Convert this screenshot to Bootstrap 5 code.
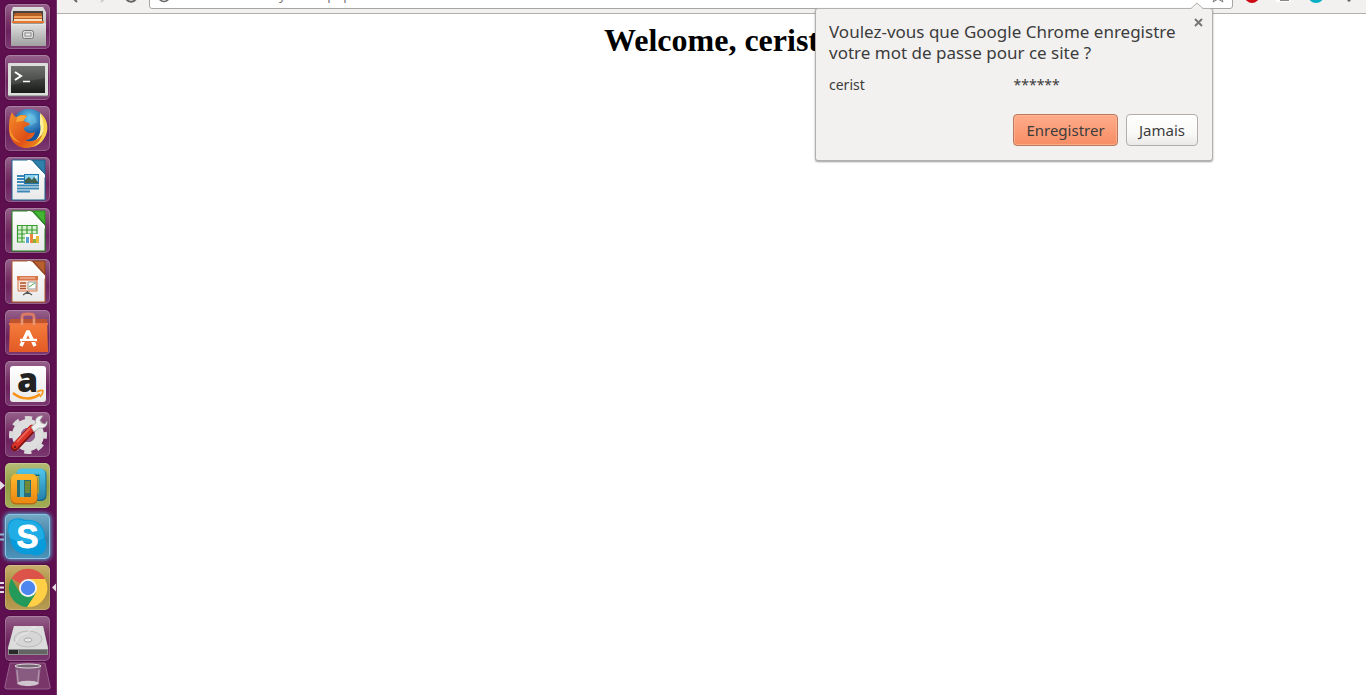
<!DOCTYPE html>
<html lang="fr">
<head>
<meta charset="utf-8">
<meta name="viewport" content="width=device-width, initial-scale=1">
<title>Welcome</title>
<link href="https://cdn.jsdelivr.net/npm/bootstrap@5.3.0/dist/css/bootstrap.min.css" rel="stylesheet">
<style>
  body { background: #fff; font-family: "Noto Sans", "Open Sans", sans-serif; color: #3c3c3c; }
  .launcher { width: 57px; padding: 4px 5px 0; gap: 6px; background: #5e0f4f; border-right: 1px solid #763a6b; }
  .tile { width: 45px; height: 45px; border: 0; padding: 0; border-radius: 5px; flex: none;
    background: linear-gradient(#96628c, #793568 38%, #6c2260 60%, #7c3970);
    box-shadow: inset 0 0 0 1px rgba(255,255,255,.2), 0 0 2px rgba(40,0,35,.6); }
  .tile svg { display: block; width: 45px; height: 45px; overflow: visible; }
  .tile-vm { background: linear-gradient(#b5bd76, #929e42 50%, #a3ad57); }
  .tile-skype { background: linear-gradient(#74aac5, #3e7da2 55%, #4d94bb); box-shadow: inset 0 0 0 1px #8cc4e0, 0 0 4px 1px #58a9d3; }
  .tile-chrome { background: linear-gradient(#c8b06c, #a8893c 50%, #b79c52); }
  .tile-bin { height: 28px; margin-top: -5px; background: none; box-shadow: none; }
  .tile-bin svg { height: 28px; }
  .browser { min-width: 0; }
  .toolbar { height: 14px; padding-bottom: 4px; background: #f2f1f0; border-bottom: 1px solid #b3b1af; overflow: hidden; }
  .tool { border: 0; background: none; padding: 0; flex: none; }
  .tool svg, .omnibox svg { display: block; }
  .nav-tools { width: 92px; padding-left: 10px; gap: 14px; }
  .ext-tools { width: 133px; padding-left: 10px; gap: 16px; }
  .omnibox { height: 28px; background: #fff; border: 1px solid #a6a6a6; border-radius: 3px; padding: 0 7px; }
  .omnibox input { border: 0; outline: 0; padding: 0; margin-left: 7px; font-size: 13px; line-height: 20px; color: #777; background: none; min-width: 0; }
  .page-title { font: bold 32px/36px "Liberation Serif", serif; color: #000; margin: 8px 0 0; }
  .bubble { top: 8px; right: 153px; width: 398px; padding: 12px 14px 14px 13px; background: #f2f1f0; border: 1px solid #b3b1af; border-radius: 3px; box-shadow: 0 1px 2px rgba(0,0,0,.4); }
  .bubble-tip { top: -7px; right: 8px; }
  .bubble-close { top: 8px; right: 9px; border: 0; padding: 0; background: none; }
  .bubble-close svg { display: block; }
  .bubble h2 { font-size: 17px; line-height: 21px; margin: 0 0 12px; white-space: nowrap; font-weight: 400; }
  .cred { font-size: 14px; line-height: 20px; margin-bottom: 19px; }
  .act { height: 32px; font-size: 15px; line-height: 20px; padding: 0 8px; border-radius: 4px; color: #3c3c3c; border: 1px solid #b1aeab; background: linear-gradient(#fff, #f9f9f8 60%, #ebe9e7); }
  .act-save { width: 105px; border-color: #b9795f; background: linear-gradient(#ffac8b, #f68d65); box-shadow: inset 0 0 0 1px rgba(255,190,160,.6); }
  .act-never { width: 72px; }
</style>
</head>
<body>
<div class="d-flex min-vh-100">
  <nav class="launcher d-flex flex-column flex-shrink-0 position-relative" aria-label="Lanceur">
    <svg width="0" height="0" class="position-absolute" aria-hidden="true">
      <defs>
        <linearGradient id="gGrey" x2="0" y2="1"><stop stop-color="#dedede"/><stop offset="1" stop-color="#a0a0a0"/></linearGradient>
        <linearGradient id="gPaper" x2="0" y2="1"><stop stop-color="#fff"/><stop offset="1" stop-color="#e9e9e9"/></linearGradient>
        <linearGradient id="gTerm" x2="0" y2="1"><stop stop-color="#606260"/><stop offset="1" stop-color="#191b19"/></linearGradient>
        <linearGradient id="gFox" x2="1" y2="1"><stop stop-color="#f4902a"/><stop offset=".6" stop-color="#df4f17"/><stop offset="1" stop-color="#f39a20"/></linearGradient>
        <radialGradient id="gGlobe" cy=".25"><stop stop-color="#66c8ee"/><stop offset="1" stop-color="#15539d"/></radialGradient>
        <linearGradient id="gBag" x2="0" y2="1"><stop stop-color="#f7813f"/><stop offset="1" stop-color="#e25a25"/></linearGradient>
        <linearGradient id="gVmB" x2="0" y2="1"><stop stop-color="#4dc0e5"/><stop offset="1" stop-color="#2888b2"/></linearGradient>
        <linearGradient id="gVmO" x2="0" y2="1"><stop stop-color="#ffb52b"/><stop offset="1" stop-color="#ed8b13"/></linearGradient>
      </defs>
    </svg>

    <button class="tile" aria-label="Fichiers"><svg viewBox="0 0 45 45">
      <path d="M8 3h30l3 5v33H6V8z" fill="url(#gGrey)"/><path d="M8 7h30v13H8z" fill="#4b423e"/>
      <path d="M9 10l2-1h25l1 1v9H9z" fill="#b95f28"/><path d="M9 12h28v2H9z" fill="#efa25e"/><path d="M9 15h28v3H9z" fill="#f6dfc1"/><path d="M7 17h32v2H7z" fill="#e8772e"/>
      <path d="M6 20h35v22H6z" fill="url(#gGrey)"/><path d="M6 20h35" stroke="#eee"/><rect x="17.500" y="26.500" width="11" height="8" rx="2" fill="#ddd" stroke="#777"/><rect x="20" y="29" width="6" height="3" fill="#f4f4f4" stroke="#888"/>
    </svg></button>

    <button class="tile" aria-label="Terminal"><svg viewBox="0 0 45 45">
      <rect x="3" y="8" width="40" height="33" rx="1" fill="#dcdedb"/><path d="M3 41h40" stroke="#777"/><rect x="6" y="11" width="34" height="27" fill="url(#gTerm)"/><path d="M6 11h34v12L6 30z" fill="#fff" opacity=".09"/>
      <path d="M10 17l6 4-6 4" fill="none" stroke="#fff" stroke-width="2"/><path d="M18 26.500h7" stroke="#fff" stroke-width="1.500"/>
    </svg></button>

    <button class="tile" aria-label="Firefox"><svg viewBox="0 0 45 45">
      <circle cx="24" cy="20.500" r="17.500" fill="url(#gGlobe)"/><path d="M24 7l6 3 2 6-7 4-4-5z" fill="#79c8e5" opacity=".45"/>
      <path d="M35 7c7 5 9 14 6 22-4 9-11 13-20 12l6-6c8 0 11-5 11-12 0-6-1-12-3-16z" fill="#f8d24a"/><path d="M35 7c5 9 4 17 2 22l-8 8-6 1c10-2 14-12 12-20z" fill="#fff0a0"/>
      <path d="M7 6c1 3 3 5 5 5 4-3 8-2 10-1l-4 5c2 1 5 1 7 3-1 2-5 2-6 4 0 5 7 6 11 4-1 5-5 8-10 8 6 3 14 0 17-6-1 8-8 14-16 14C11 42 3 33 4 20c0-5 1-10 3-14z" fill="url(#gFox)"/>
      <path d="M5 20c0 8 5 14 12 17-5-1-9-3-12-8z" fill="#f69a2c"/><path d="M12 11c3-2 6-2 10-1l-4 5-7 1z" fill="#f9a63a"/>
    </svg></button>

    <button class="tile" aria-label="LibreOffice Writer"><svg viewBox="0 0 45 45">
      <path d="M7 3h20l13 14v26H7z" fill="url(#gPaper)" stroke="#176791"/><path d="M27 3h13v14z" fill="#2f7fab" stroke="#1d5f87"/><path d="M25 3l15 15v3L22 3z" fill="#fff"/>
      <path d="M12 19h7M12 22h7M12 25h7M12 28.500h22M12 31.500h22M12 34.500h13" stroke="#3b89b8" stroke-width="2"/>
      <rect x="19.500" y="17.500" width="14" height="9" fill="#8bd2ee" stroke="#1f77ae"/><path d="M20 26v-3l4-3 3 3 2-3 4 5v1z" fill="#44604a"/><circle cx="31" cy="20" r="1" fill="#fff"/>
    </svg></button>

    <button class="tile" aria-label="LibreOffice Calc"><svg viewBox="0 0 45 45">
      <path d="M7 3h20l13 14v26H7z" fill="url(#gPaper)" stroke="#188515"/><path d="M28 3h12v13z" fill="#43b532" stroke="#238b19"/><path d="M25 3l15 15v3L22 3z" fill="#fff"/>
      <path d="M12 18h20v16H12z" fill="#d9f0d3"/><path d="M12.500 17v17M17 17v17M22 17v17M27 17v17M32 17v17M12 17.500h20M12 22h20M12 26h20M12 30h20M12 34h20" stroke="#3c9d32" stroke-width="1.200"/>
      <path d="M20 26h14v9H20z" fill="#fff"/><path d="M21 29h3v6h-3z" fill="#5d9fd0"/><path d="M25 26h3v9h-3z" fill="#ed853d"/><path d="M28 31h3v4h-3z" fill="#8eb33b"/><path d="M31 28h3v7h-3z" fill="#e6bd37"/>
    </svg></button>

    <button class="tile" aria-label="LibreOffice Impress"><svg viewBox="0 0 45 45">
      <path d="M7 2h20l13 14v27H7z" fill="url(#gPaper)" stroke="#af5926"/><path d="M28 2h12v13z" fill="#b66030" stroke="#8b3e18"/><path d="M25 2l15 15v3L22 2z" fill="#fff"/>
      <path d="M12 17h21v4H12z" fill="#d9764a"/><path d="M13 21h19v11H13z" fill="#fae2d5" stroke="#d9764a"/><path d="M15 19h15" stroke="#f6cdb8"/><path d="M15 24h6M15 27h6M15 29.500h6" stroke="#ae5028" stroke-width="1.500"/><path d="M23 23h8v7h-8z" fill="#fff" stroke="#999"/><path d="M24 28l3-2 3-2" fill="none" stroke="#4caf50"/><path d="M22.500 32v3M18 36l4.500-3 4.500 3" fill="none" stroke="#555" stroke-width="1.300"/>
    </svg></button>

    <button class="tile" aria-label="Logithèque"><svg viewBox="0 0 45 45">
      <path d="M17 12V7c0-3 2-3 6-3s6 0 6 3v5" fill="none" stroke="#dc7965" stroke-width="3"/><path d="M5 9h37l1 33H4z" fill="url(#gBag)"/><path d="M5 9h37v4H5z" fill="#bd542d"/><path d="M4 13h39v2H4z" fill="#ef7641"/><path d="M17 9v6M29 9v6" stroke="#e59878" stroke-width="2.500"/>
      <path d="M16 36l7-15 7 15" fill="none" stroke="#fff" stroke-width="3.500" stroke-linejoin="bevel"/><path d="M15 30h17" stroke="#fff" stroke-width="2.500"/><path d="M17 31.500h13" stroke="#e9662f"/>
    </svg></button>

    <button class="tile" aria-label="Amazon"><svg viewBox="0 0 45 45">
      <rect x="5" y="5" width="36" height="36" rx="3" fill="url(#gPaper)"/>
      <text x="22.500" y="31" text-anchor="middle" font-family="Open Sans, sans-serif" font-weight="800" font-size="34" fill="#222">a</text>
      <path d="M8 32c8 7 20 7 27 1" fill="none" stroke="#f79418" stroke-width="2.500"/><path d="M32 31c3-2 6-2 6-1s-1 4-3 6" fill="none" stroke="#f79418" stroke-width="1.700"/>
    </svg></button>

    <button class="tile" aria-label="Paramètres système"><svg viewBox="0 0 45 45">
      <circle cx="23" cy="23" r="11.500" fill="none" stroke="#dedede" stroke-width="9"/><circle cx="23" cy="23" r="16.500" fill="none" stroke="#dadada" stroke-width="5" stroke-dasharray="7 5.960" stroke-dashoffset="3.500"/><circle cx="23" cy="23" r="7" fill="#965f8e"/>
      <path d="M10 35L27 17" stroke="#82100e" stroke-width="8" stroke-linecap="round"/><path d="M10 34L27 16" stroke="#d8342a" stroke-width="6" stroke-linecap="round"/><path d="M12 30L25 16" stroke="#f06c5d" stroke-width="1.500"/>
      <path d="M26 15l5-4c-2-4 2-8 7-7l-3 4 1 3 4 1 2-3c1 5-3 8-8 7l-5 4z" fill="#eee" stroke="#9b9b9b" stroke-width=".7"/><circle cx="10" cy="35" r="1.300" fill="#6c1713"/>
    </svg></button>

    <button class="tile tile-vm" aria-label="VMware"><svg viewBox="0 0 45 45">
      <rect x="15" y="9.500" width="23" height="25" rx="2" fill="none" stroke="#166988" stroke-width="7" stroke-linejoin="round"/><rect x="14.500" y="8.500" width="23" height="25" rx="2" fill="none" stroke="url(#gVmB)" stroke-width="6"/>
      <rect x="9" y="15" width="20" height="23" rx="2" fill="none" stroke="#b46c17" stroke-width="7"/><rect x="9" y="14" width="20" height="23" rx="2" fill="none" stroke="url(#gVmO)" stroke-width="6"/>
      <path d="M12 17h14v17H12z" fill="#276f78"/><path d="M20 18h5v12h-5z" fill="#728839"/><path d="M17 17v17" stroke="#49b6cb" stroke-width="4"/>
    </svg></button>

    <button class="tile tile-skype" aria-label="Skype"><svg viewBox="0 0 45 45">
      <path d="M5 7c5-4 11-3 15-1 12-2 21 7 20 19 2 5 2 10-2 14-4 3-9 3-13 1-12 2-20-6-20-18-2-5-3-11 0-15z" fill="#079bdc"/><path d="M6 8c4-4 10-2 13-1 12-2 20 5 20 17-9 6-23 6-34 0-2-5-2-12 1-16z" fill="#32b9ec" opacity=".6"/>
      <text x="22.500" y="34" text-anchor="middle" font-family="Liberation Sans, sans-serif" font-weight="700" font-size="33" fill="#fff" stroke="#fff" stroke-width=".8">S</text>
    </svg></button>

    <button class="tile tile-chrome" aria-label="Google Chrome"><svg viewBox="0 0 45 45">
      <path d="M23 14h17a19 19 0 0 1-18 28l9-15z" fill="#ffcf45"/><path d="M6.500 13.500A19 19 0 0 1 40 14H23v9z" fill="#dc5449"/><path d="M6.500 13.500L15 28l8 4 8-4-9 14A19 19 0 0 1 6.500 13.500z" fill="#239a59"/>
      <circle cx="23" cy="23" r="9" fill="#f4f4f4"/><circle cx="23" cy="23" r="7.200" fill="#4c86ee"/>
    </svg></button>

    <button class="tile" aria-label="Disque"><svg viewBox="0 0 45 45">
      <path d="M9 10h29l5 21v8H3v-8z" fill="#a0a0a0"/><path d="M9 10h29l5 23H3z" fill="#dcdcdc"/><path d="M3 33h40v6H3z" fill="#8e8e8e"/><path d="M4 34h9v4H4z" fill="#292929"/><path d="M14 34h28v4H14z" fill="#646464"/><ellipse cx="23" cy="23" rx="14" ry="8" fill="#d6d6d6" stroke="#bbb"/><ellipse cx="23" cy="24" rx="4" ry="2" fill="#e6e6e6" stroke="#aaa"/><path d="M31 11c-9 0-3 5-12 7-6 1-6 5-9 9" fill="none" stroke="#eee"/>
    </svg></button>

    <button class="tile tile-bin" aria-label="Corbeille"><svg viewBox="0 0 45 28">
      <path d="M5 1h35l5 23q1 3-2 3H2q-3 0-2-3z" fill="#793668" stroke="#95608c"/><path d="M10 4l2 18c2 3 20 3 22 0l2-18z" fill="#8c6687" opacity=".8"/><ellipse cx="23" cy="4" rx="13" ry="2" fill="#776374" stroke="#ddd"/><path d="M12 21c2 4 20 4 22 0-3-3-19-3-22 0z" fill="#d0c5cd"/><path d="M12 8l1 12M34 8l-1 12" stroke="#b091aa" stroke-width="1.500"/>
    </svg></button>

    <svg class="position-absolute top-0 start-0" width="57" height="620" viewBox="0 0 57 620" pointer-events="none" aria-hidden="true">
      <path d="M0 481l5 4.500-5 4.500z" fill="#e5dbe3"/><path d="M0 534.500h4M0 539.500h4" stroke="#8fb9d1" stroke-width="2"/><path d="M0 583h4M0 587.500h4M0 592h4" stroke="#e5dbe3" stroke-width="2"/><path d="M56 583.500l-4 4 4 4z" fill="#e5dbe3"/>
    </svg>
  </nav>

  <div class="browser flex-grow-1 position-relative">
    <header class="toolbar d-flex align-items-end">
      <div class="nav-tools d-flex align-items-end flex-shrink-0">
        <button class="tool" aria-label="Précédent"><svg width="15" height="24"><path d="M10 7l-5 5 5 5" fill="none" stroke="#666" stroke-width="2"/></svg></button>
        <button class="tool" aria-label="Suivant"><svg width="15" height="24"><path d="M5 7l5 5-5 5" fill="none" stroke="#ccc" stroke-width="2"/></svg></button>
        <button class="tool" aria-label="Actualiser"><svg width="15" height="24"><path d="M12 10a6 6 0 1 0-1 4" fill="none" stroke="#666" stroke-width="2"/></svg></button>
      </div>
      <div class="omnibox d-flex align-items-center flex-grow-1">
        <svg width="14" height="20" aria-hidden="true"><circle cx="7" cy="11" r="5.500" fill="none" stroke="#666" stroke-width="1.500"/><path d="M7 10v4M7 7v1" stroke="#666"/></svg>
        <input class="flex-grow-1" type="text" aria-label="Adresse" value="localhost/security/index.php">
        <button class="tool me-2" aria-label="Mots de passe"><svg width="12" height="20"><path d="M2 5h4v8H4" fill="none" stroke="#777" stroke-width="2"/></svg></button>
        <button class="tool" aria-label="Favori"><svg width="14" height="20"><path d="M7 4l2 4 4 1-3 3 2 5-5-3-5 3 2-5-3-3 4-1z" fill="none" stroke="#777"/></svg></button>
      </div>
      <div class="ext-tools d-flex align-items-end flex-shrink-0">
        <button class="tool" aria-label="Bloqueur"><svg width="16" height="24"><circle cx="9" cy="10.500" r="7.500" fill="#cc0b12"/></svg></button>
        <button class="tool" aria-label="Extension"><svg width="16" height="24"><path d="M1 0h15v17H1z" fill="#fff"/><path d="M5 15h9" stroke="#888" stroke-width="2"/></svg></button>
        <button class="tool" aria-label="Outil"><svg width="16" height="24"><circle cx="9" cy="10" r="8" fill="#0aafc3"/></svg></button>
        <button class="tool" aria-label="Menu"><svg width="18" height="24"><circle cx="10" cy="15" r="1.700" fill="#666"/></svg></button>
      </div>
    </header>

    <main><h1 class="page-title text-center">Welcome, cerist</h1></main>

    <section class="bubble position-absolute" role="dialog" aria-labelledby="ask">
      <svg class="bubble-tip position-absolute" width="14" height="8" aria-hidden="true"><path d="M0 7.500L7 1l7 6.500V8H0z" fill="#f2f1f0"/><path d="M0 6.500h1L7 1l6 5.500h1" fill="none" stroke="#b3b1af"/></svg>
      <button class="bubble-close position-absolute" aria-label="Fermer"><svg width="10" height="10"><path d="M2 2l7 7M9 2l-7 7" stroke="#777" stroke-width="2"/></svg></button>
      <h2 id="ask">Voulez-vous que Google Chrome enregistre<br>votre mot de passe pour ce site ?</h2>
      <div class="cred row g-0"><span class="col-6">cerist</span><span class="col-6">******</span></div>
      <div class="d-flex justify-content-end gap-2"><button class="act act-save">Enregistrer</button><button class="act act-never">Jamais</button></div>
    </section>
  </div>
</div>
<script src="https://cdn.jsdelivr.net/npm/bootstrap@5.3.0/dist/js/bootstrap.bundle.min.js"></script>
</body>
</html>
